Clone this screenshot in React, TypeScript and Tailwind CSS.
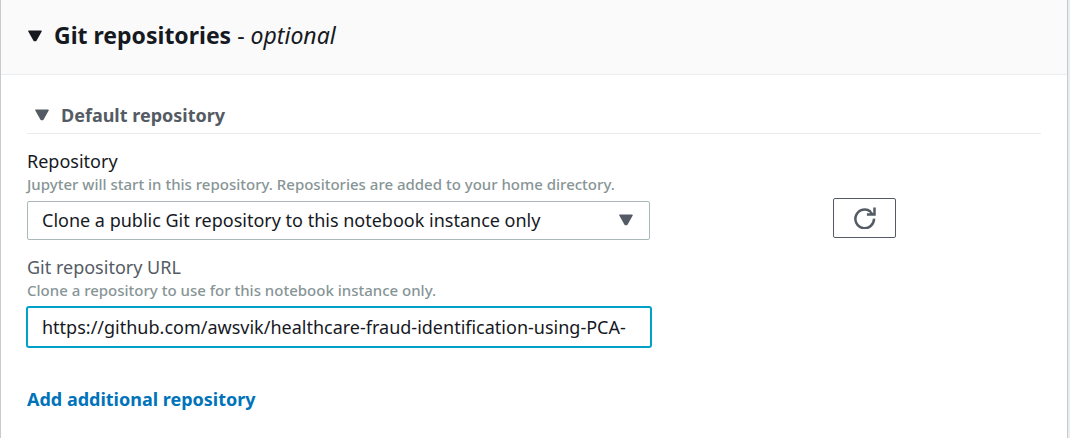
import { useState } from 'react';

function Caret({ className }: { className: string }) {
  return (
    <svg aria-hidden="true" viewBox="0 0 14 12" className={className} fill="currentColor">
      <path d="M1 1.2h12L7.8 10.4h-1.6z" stroke="currentColor" strokeWidth="1.6" strokeLinejoin="round" />
    </svg>
  );
}

function RefreshIcon() {
  return (
    <svg aria-hidden="true" viewBox="0 0 22 22" className="h-[22px] w-[22px]" fill="none" stroke="currentColor" strokeWidth="2.5">
      <path d="M20 11.6a9.3 9.3 0 1 1-3.4-6.9" />
      <path d="M20.5 .6v6.9h-7.6" />
      <path d="M16 3l5 5h-5z" fill="currentColor" stroke="none" />
    </svg>
  );
}

export default function App() {
  const [open, setOpen] = useState(true);
  const [repoOpen, setRepoOpen] = useState(true);
  const [url, setUrl] = useState('https://github.com/awsvik/healthcare-fraud-identification-using-PCA-');

  return (
    <div className="min-h-screen bg-[#eaeded] pr-0.5 font-['Noto_Sans','Open_Sans',sans-serif] text-[#16191f]">
      <section className="min-h-screen border-x border-[#c5cbd0] bg-white">
        <header className="border-b border-[#eaeded] bg-[#fafafa] px-[27px] pt-[19px] pb-[23px]">
          <h2 className="text-[23px] leading-8">
            <button type="button" aria-expanded={open} onClick={() => setOpen(!open)} className="flex items-center gap-3">
              <Caret className="mt-0.5 h-3 w-3.5" />
              <span>
                <strong className="font-bold">Git repositories</strong> - <em>optional</em>
              </span>
            </button>
          </h2>
        </header>

        {open && (
          <div className="px-[26px] pt-7">
            <h3 className="border-b border-[#eaeded] px-2 pb-1.5 text-[18px] leading-6 font-bold text-[#545b64]">
              <button type="button" aria-expanded={repoOpen} onClick={() => setRepoOpen(!repoOpen)} className="flex items-center gap-3">
                <Caret className="h-3 w-3.5" />
                Default repository
              </button>
            </h3>

            {repoOpen && (
              <div className="pt-4">
                <label htmlFor="repository" className="block text-[18px] leading-[22px]">Repository</label>
                <p id="repository-hint" className="mt-0.5 text-[15px] leading-5 font-medium text-[#879596]">
                  Jupyter will start in this repository. Repositories are added to your home directory.
                </p>
                <div className="mt-1 grid grid-cols-[minmax(0,623px)_auto] items-end justify-start gap-x-[183px]">
                  <div className="relative">
                    <select
                      id="repository"
                      aria-describedby="repository-hint"
                      className="block h-[39px] w-full appearance-none rounded-xs border border-[#aab7b8] bg-white px-3.5 text-[18px]"
                    >
                      <option>Clone a public Git repository to this notebook instance only</option>
                    </select>
                    <Caret className="pointer-events-none absolute top-[13px] right-[17px] h-3 w-3.5 text-[#545b64]" />
                  </div>
                  <button
                    type="button"
                    aria-label="Refresh repositories"
                    className="mb-0.5 flex h-10 w-[63px] items-center justify-center rounded-xs border border-[#545b64] bg-white text-[#545b64]"
                  >
                    <RefreshIcon />
                  </button>
                </div>

                <label htmlFor="repository-url" className="mt-4 block text-[18px] leading-[22px] text-[#545b64]">Git repository URL</label>
                <p id="repository-url-hint" className="mt-0.5 text-[15px] leading-5 font-medium text-[#879596]">
                  Clone a repository to use for this notebook instance only.
                </p>
                <input
                  id="repository-url"
                  type="text"
                  aria-describedby="repository-url-hint"
                  value={url}
                  onChange={(e) => setUrl(e.target.value)}
                  className="mt-[7px] block h-10 w-full max-w-[624px] rounded-xs border border-[#00a1c9] bg-white px-3.5 text-[18px] ring-1 ring-[#00a1c9] outline-none"
                />
              </div>
            )}

            <a href="#add-repository" className="mt-10 inline-block text-[18px] leading-6 font-bold text-[#0073bb]">
              Add additional repository
            </a>
          </div>
        )}
      </section>
    </div>
  );
}
